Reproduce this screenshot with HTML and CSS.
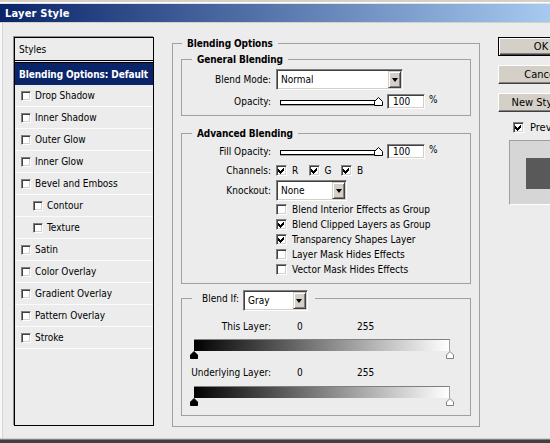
FILE: index.html
```html
<!DOCTYPE html>
<html>
<head>
<meta charset="utf-8">
<title>Layer Style</title>
<link rel="stylesheet" href="styles.css">
</head>
<body>
<div class="window">
  <div class="frame-top"></div>
  <div class="titlebar">Layer Style</div>
  <div class="title-rule"></div>
  <div class="main">
    <div class="styles-panel">
      <div class="sp-head">Styles</div>
      <div class="sp-sel">Blending Options: Default</div>
      <div class="sp-item"><span class="cb sm"></span>Drop Shadow</div>
      <div class="sp-item"><span class="cb sm"></span>Inner Shadow</div>
      <div class="sp-item"><span class="cb sm"></span>Outer Glow</div>
      <div class="sp-item"><span class="cb sm"></span>Inner Glow</div>
      <div class="sp-item"><span class="cb sm"></span>Bevel and Emboss</div>
      <div class="sp-item sub"><span class="cb sm"></span>Contour</div>
      <div class="sp-item sub"><span class="cb sm"></span>Texture</div>
      <div class="sp-item"><span class="cb sm"></span>Satin</div>
      <div class="sp-item"><span class="cb sm"></span>Color Overlay</div>
      <div class="sp-item"><span class="cb sm"></span>Gradient Overlay</div>
      <div class="sp-item"><span class="cb sm"></span>Pattern Overlay</div>
      <div class="sp-item"><span class="cb sm"></span>Stroke</div>
    </div>

    <fieldset class="grp outer">
      <legend class="lg">Blending Options</legend>

      <fieldset class="grp gen">
        <legend class="lg lg-in">General Blending</legend>
        <div class="row h21">
          <span class="lbl">Blend Mode:</span>
          <div class="combo w-mode"><span class="combo-val">Normal</span><span class="combo-btn"><i class="tri"></i></span></div>
        </div>
        <div class="row h16 mt3">
          <span class="lbl">Opacity:</span>
          <div class="slider"><div class="track"></div><svg class="thumb" viewBox="0 0 9 9"><path d="M0.5 8.5V4.5L4.5 0.5L8.5 4.5V8.5Z"/></svg></div>
          <div class="num">100</div><span class="pct">%</span>
        </div>
      </fieldset>

      <fieldset class="grp adv">
        <legend class="lg lg-in">Advanced Blending</legend>
        <div class="row h16">
          <span class="lbl">Fill Opacity:</span>
          <div class="slider"><div class="track"></div><svg class="thumb" viewBox="0 0 9 9"><path d="M0.5 8.5V4.5L4.5 0.5L8.5 4.5V8.5Z"/></svg></div>
          <div class="num">100</div><span class="pct">%</span>
        </div>
        <div class="row h16 mt3">
          <span class="lbl">Channels:</span>
          <span class="ch"><span class="cb"><svg class="tick" viewBox="0 0 7 7"><path d="M0 2L2 4L6 0V3L2 7L0 5Z"/></svg></span>R</span>
          <span class="ch"><span class="cb"><svg class="tick" viewBox="0 0 7 7"><path d="M0 2L2 4L6 0V3L2 7L0 5Z"/></svg></span>G</span>
          <span class="ch"><span class="cb"><svg class="tick" viewBox="0 0 7 7"><path d="M0 2L2 4L6 0V3L2 7L0 5Z"/></svg></span>B</span>
        </div>
        <div class="row h21 mt2">
          <span class="lbl">Knockout:</span>
          <div class="combo w-ko"><span class="combo-val">None</span><span class="combo-btn"><i class="tri"></i></span></div>
        </div>
        <div class="cblist">
          <div class="cbrow"><span class="cb"></span>Blend Interior Effects as Group</div>
          <div class="cbrow"><span class="cb"><svg class="tick" viewBox="0 0 7 7"><path d="M0 2L2 4L6 0V3L2 7L0 5Z"/></svg></span>Blend Clipped Layers as Group</div>
          <div class="cbrow"><span class="cb"><svg class="tick" viewBox="0 0 7 7"><path d="M0 2L2 4L6 0V3L2 7L0 5Z"/></svg></span>Transparency Shapes Layer</div>
          <div class="cbrow"><span class="cb"></span>Layer Mask Hides Effects</div>
          <div class="cbrow"><span class="cb"></span>Vector Mask Hides Effects</div>
        </div>
      </fieldset>

      <fieldset class="grp bif">
        <legend class="lg-bif">
          <div class="bif-head">
            <span>Blend If:</span>
            <div class="combo w-gray"><span class="combo-val">Gray</span><span class="combo-btn"><i class="tri"></i></span></div>
          </div>
        </legend>
        <div class="ramp-row">
          <span class="lbl">This Layer:</span><span class="v0">0</span><span>255</span>
        </div>
        <div class="ramp"></div>
        <div class="ramp-thumbs">
          <svg class="rthumb dark" viewBox="0 0 8 8"><path d="M0.5 7.5V4L4 0.5L7.5 4V7.5Z"/></svg>
          <svg class="rthumb light" viewBox="0 0 8 8"><path d="M0.5 7.5V4L4 0.5L7.5 4V7.5Z"/></svg>
        </div>
        <div class="ramp-row mt7">
          <span class="lbl">Underlying Layer:</span><span class="v0">0</span><span>255</span>
        </div>
        <div class="ramp mt7"></div>
        <div class="ramp-thumbs">
          <svg class="rthumb dark" viewBox="0 0 8 8"><path d="M0.5 7.5V4L4 0.5L7.5 4V7.5Z"/></svg>
          <svg class="rthumb light" viewBox="0 0 8 8"><path d="M0.5 7.5V4L4 0.5L7.5 4V7.5Z"/></svg>
        </div>
      </fieldset>
    </fieldset>

    <div class="side">
      <div class="btn default">OK</div>
      <div class="btn">Cancel</div>
      <div class="btn">New Style...</div>
      <div class="preview-row"><span class="cb"><svg class="tick" viewBox="0 0 7 7"><path d="M0 2L2 4L6 0V3L2 7L0 5Z"/></svg></span>Preview</div>
      <div class="swatch"><div class="swatch-in"></div></div>
    </div>
  </div>
  <div class="frame-bottom"></div>
</div>
</body>
</html>
```

FILE: styles.css
```css
html, body {
  margin: 0;
  padding: 0;
  overflow: hidden;
  background: #ececec;
}

body {
  font-family: "DejaVu Sans Condensed", "Liberation Sans", sans-serif;
  font-size: 10px;
  line-height: 13px;
  color: #000;
}

.window {
  width: 550px;
  height: 443px;
  display: flex;
  flex-direction: column;
  overflow: hidden;
  background: #ececec;
}

.frame-top {
  height: 4px;
  flex: none;
  background: linear-gradient(#d4d0c8 0 2px, #ffffff 2px 3px, #e4e4e4 3px 4px);
}

.titlebar {
  height: 18px;
  flex: none;
  display: flex;
  align-items: center;
  padding-left: 5px;
  background: linear-gradient(90deg, #0a246a, #a6caf0);
  color: #fff;
  font-weight: bold;
  font-size: 11px;
  letter-spacing: 0.2px;
}

.title-rule {
  height: 1px;
  flex: none;
  background: #d4d0c8;
}

.main {
  flex: 1;
  display: flex;
  align-items: flex-start;
  padding: 14px 0 0 14px;
  overflow: hidden;
  box-shadow: inset 2px 0 0 #f8f8f8, inset 3px 0 0 #d6d6d6;
}

.frame-bottom {
  height: 5px;
  flex: none;
  background: linear-gradient(#d0d0d0 0 1px, #808080 1px 2px, #404040 2px 5px);
}

/* ---------- styles list ---------- */
.styles-panel {
  flex: none;
  width: 140px;
  height: 389px;
  box-sizing: border-box;
  border: 1px solid #000;
  box-shadow: -1px -1px 0 #909090;
  margin-right: 18px;
}

.sp-head {
  height: 22px;
  display: flex;
  align-items: center;
  padding-left: 4px;
  border-bottom: 3px double #000;
}

.sp-sel {
  height: 22px;
  display: flex;
  align-items: center;
  padding-left: 4px;
  background: #0a246a;
  color: #fff;
  font-weight: bold;
  letter-spacing: -0.1px;
}

.sp-item {
  height: 21px;
  display: flex;
  align-items: center;
  padding-left: 6px;
  border-bottom: 1px solid #fbfbfb;
}

.sp-item.sub {
  padding-left: 18px;
}

.sp-item .cb {
  margin-right: 4px;
}

/* ---------- checkbox ---------- */
.cb {
  flex: none;
  width: 11px;
  height: 11px;
  box-sizing: border-box;
  background: #fff;
  border: 1px solid;
  border-color: #808080 #ffffff #ffffff #808080;
  box-shadow: inset 1px 1px 0 #404040, inset -1px -1px 0 #d4d0c8;
  display: inline-flex;
  align-items: center;
  justify-content: center;
}

.cb.sm {
  width: 10px;
  height: 10px;
}

.tick {
  width: 7px;
  height: 7px;
  display: block;
  fill: #000;
  shape-rendering: crispEdges;
}

/* ---------- group boxes ---------- */
fieldset.grp {
  margin: 0;
  border: 1px solid #a0a0a0;
  min-width: 0;
}

.outer {
  flex: none;
  width: 308px;
  box-sizing: border-box;
  margin-top: -1px;
  padding: 3px 8px 10px 8px;
}

.lg {
  font-weight: bold;
  padding: 0 5px;
  margin-left: 1px;
  line-height: 13px;
  letter-spacing: -0.1px;
}

.lg-in {
  margin-left: 10px;
}

.gen {
  padding: 3px 0 6px 0;
}

.adv {
  padding: 3px 0 6px 0;
  margin-top: 11px !important;
}

.bif {
  padding: 14px 0 9px 0;
  margin-top: 6px !important;
}

.row {
  display: flex;
  align-items: center;
}

.h21 { height: 21px; }
.h16 { height: 16px; }
.mt2 { margin-top: 2px; }
.mt3 { margin-top: 3px; }
.mt7 { margin-top: 7px; }

.lbl {
  flex: none;
  width: 89px;
  margin-right: 5px;
  text-align: right;
  white-space: nowrap;
}

/* ---------- combo box ---------- */
.combo {
  flex: none;
  height: 21px;
  box-sizing: border-box;
  padding: 1px;
  display: flex;
  background: #fff;
  border: 1px solid;
  border-color: #808080 #ffffff #ffffff #808080;
  box-shadow: inset 1px 1px 0 #404040, inset -1px -1px 0 #d4d0c8;
}

.w-mode { width: 127px; }
.w-ko { width: 71px; }
.w-gray { width: 65px; }

.combo-val {
  flex: 1;
  display: flex;
  align-items: center;
  padding-left: 3px;
}

.combo-btn {
  flex: none;
  width: 13px;
  height: 17px;
  box-sizing: border-box;
  background: #d4d0c8;
  border: 1px solid;
  border-color: #d4d0c8 #404040 #404040 #d4d0c8;
  box-shadow: inset 1px 1px 0 #fff, inset -1px -1px 0 #808080;
  display: flex;
  align-items: center;
  justify-content: center;
}

.tri {
  display: block;
  width: 0;
  height: 0;
  border-style: solid;
  border-width: 4px 3.5px 0 3.5px;
  border-color: #000 transparent transparent transparent;
}

/* ---------- slider ---------- */
.slider {
  flex: none;
  position: relative;
  width: 108px;
  height: 16px;
}

.track {
  width: 97px;
  height: 5px;
  box-sizing: border-box;
  margin: 7px 0 0 4px;
  background: #fff;
  border: 1px solid #000;
  box-shadow: 0 1px 0 #a0a0a0;
}

.thumb {
  position: absolute;
  left: 98px;
  top: 4px;
  width: 9px;
  height: 9px;
  fill: #fff;
  stroke: #000;
  stroke-width: 1;
}

.num {
  flex: none;
  width: 38px;
  height: 15px;
  box-sizing: border-box;
  margin-left: 3px;
  padding-left: 5px;
  display: flex;
  align-items: center;
  background: #fff;
  border: 1px solid;
  border-color: #808080 #ffffff #ffffff #808080;
  box-shadow: inset 1px 1px 0 #404040, inset -1px -1px 0 #d4d0c8;
}

.pct {
  margin-left: 4px;
  margin-top: -3px;
}

/* ---------- channels / checkbox list ---------- */
.ch {
  flex: none;
  width: 32.5px;
  display: flex;
  align-items: center;
}

.ch .cb {
  margin-right: 5px;
}

.cblist {
  margin-top: 1px;
}

.cbrow {
  height: 15px;
  display: flex;
  align-items: center;
  padding-left: 94px;
}

.cbrow .cb {
  margin-right: 5px;
}

/* ---------- blend if ---------- */
.lg-bif {
  margin-left: 10px;
  padding: 0 7px 0 10px;
}

.bif-head {
  display: flex;
  align-items: center;
  height: 16px;
}

.bif-head .combo {
  margin-left: 4px;
  margin-bottom: -5px;
}

.ramp-row {
  display: flex;
  align-items: center;
  height: 13px;
}

.v0 {
  width: 60px;
  margin-left: 21px;
}

.ramp {
  width: 256px;
  height: 12px;
  box-sizing: border-box;
  margin: 6px 0 0 12px;
  background: linear-gradient(90deg, #000 0%, #111 6%, #fff 100%);
  border-top: 1px solid #808080;
  border-right: 1px solid #a0a0a0;
}

.ramp.mt7 {
  margin-top: 7px;
}

.ramp-thumbs {
  width: 264px;
  height: 8px;
  margin-left: 8px;
  display: flex;
  justify-content: space-between;
}

.rthumb {
  width: 8px;
  height: 8px;
  display: block;
}

.rthumb.dark {
  fill: #000;
  stroke: #000;
}

.rthumb.light {
  fill: #fff;
  stroke: #808080;
}

/* ---------- right column ---------- */
.side {
  flex: none;
  width: 90px;
  margin-left: 18px;
}

.btn {
  width: 86px;
  height: 19px;
  box-sizing: border-box;
  margin-bottom: 9px;
  display: flex;
  align-items: center;
  justify-content: center;
  background: #d4d0c8;
  border: 1px solid;
  border-color: #ffffff #404040 #404040 #ffffff;
  box-shadow: inset -1px -1px 0 #808080;
  font-size: 11px;
}

.btn.default {
  border: 1px solid #000;
  box-shadow: inset 1px 1px 0 #fff, inset -1px -1px 0 #404040, inset -2px -2px 0 #808080;
}

.preview-row {
  height: 15px;
  margin-top: -1px;
  padding-left: 15px;
  display: flex;
  align-items: center;
  font-size: 11px;
}

.preview-row .cb {
  margin-right: 6px;
}

.swatch {
  width: 60px;
  height: 65px;
  box-sizing: border-box;
  margin: 5px 0 0 11px;
  background: #d6d6d6;
  border: 1px solid #a0a0a0;
  border-right-color: #fff;
  border-bottom-color: #fff;
  padding: 17px 0 0 16px;
}

.swatch-in {
  width: 34px;
  height: 31px;
  background: #595959;
}
```
